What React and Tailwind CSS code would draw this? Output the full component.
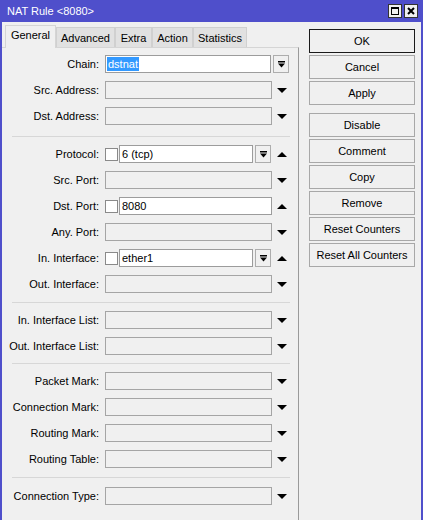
const Down = () => (
  <svg width="10" height="5" viewBox="0 0 10 5" className="block">
    <polygon points="0,0 10,0 5,5" fill="#000" />
  </svg>
)

const Up = () => (
  <svg width="10" height="5" viewBox="0 0 10 5" className="block">
    <polygon points="0,5 10,5 5,0" fill="#000" />
  </svg>
)

const DropBtn = () => (
  <div className="w-[16px] h-[18px] border border-[#adadad] bg-[#f0f0f0] flex items-center justify-center shrink-0">
    <svg width="7" height="7" viewBox="0 0 7 7" className="block">
      <rect x="0" y="0" width="7" height="1.5" fill="#000" />
      <polygon points="0,2.5 7,2.5 3.5,6.5" fill="#000" />
    </svg>
  </div>
)

const Check = () => <div className="w-[13px] h-[13px] border border-[#8a8a8a] bg-white shrink-0" />

const Label = ({ children }) => <div className="w-[97px] text-right shrink-0 whitespace-nowrap">{children}</div>

const EmptyRow = ({ label }) => (
  <div className="h-[26px] flex items-center">
    <Label>{label}</Label>
    <div className="ml-[6px] w-[167px] h-[18px] border border-[#a5a5a5] bg-[#f0f0f0]" />
    <div className="ml-[5px]"><Down /></div>
  </div>
)

const Sep = ({ h, pt }) => (
  <div className={`${h} ${pt}`}>
    <div className="ml-[10px] mr-[8px] border-t border-[#d7d7d7]" />
  </div>
)

const Tab = ({ label, w, active }) =>
  active ? (
    <div className={`${w} h-[23px] bg-[#f0f0f0] border border-b-0 border-[#d5d5d5] relative z-10 flex items-start justify-center pt-[4px]`}>
      {label}
    </div>
  ) : (
    <div className={`${w} h-[21px] bg-[#e1e1e1] border border-b-0 border-[#d0d0d0] flex items-center justify-center`}>
      {label}
    </div>
  )

const Btn = ({ label, ok, className = '' }) => (
  <div className={`h-[24px] w-[106px] flex items-center justify-center bg-[#f0f0f0] border ${ok ? 'border-[#1a1a1a]' : 'border-[#a8a8a8]'} ${className}`}>
    {label}
  </div>
)

export default function App() {
  return (
    <div
      className="w-[423px] h-[520px] bg-[#f0f0f0] flex flex-col overflow-hidden border-x-2 border-[#4f4fcb] text-[11px] text-black leading-none"
      style={{ fontFamily: '"Liberation Sans", Arial, sans-serif' }}
    >
      <div className="h-[22px] bg-[#4f4fcb] flex items-center pl-[5px] pr-[3px] shrink-0">
        <span className="text-white">NAT Rule &lt;8080&gt;</span>
        <div className="ml-auto flex gap-[2px]">
          <div className="w-[14px] h-[14px] bg-[#f0f0f0] border border-[#333] flex items-center justify-center">
            <div className="w-[8px] h-[8px] border border-t-2 border-black" />
          </div>
          <div className="w-[14px] h-[14px] bg-[#f0f0f0] border border-[#333] flex items-center justify-center">
            <svg width="8" height="8" viewBox="0 0 8 8" className="block">
              <path d="M1 1L7 7M7 1L1 7" stroke="#000" strokeWidth="2" />
            </svg>
          </div>
        </div>
      </div>

      <div className="flex flex-1">
        <div className="w-[297px] flex flex-col pt-[3px] shrink-0">
          <div className="flex items-end pl-[3px] -mb-[1px]">
            <Tab label="General" w="w-[51px]" active />
            <Tab label="Advanced" w="w-[59px]" />
            <Tab label="Extra" w="w-[37px]" />
            <Tab label="Action" w="w-[41px]" />
            <Tab label="Statistics" w="w-[54px]" />
          </div>
          <div className="flex-1 border-t border-r border-t-[#d5d5d5] border-r-[#9a9a9a] pt-[3px]">
            <div className="h-[26px] flex items-center">
              <Label>Chain:</Label>
              <div className="ml-[6px] w-[166px] h-[18px] border border-[#9c9c9c] bg-white flex items-center pl-[1px]">
                <span className="bg-[#3399ff] text-white h-[14px] flex items-center px-[1px]">dstnat</span>
              </div>
              <div className="ml-[2px]"><DropBtn /></div>
            </div>
            <EmptyRow label="Src. Address:" />
            <EmptyRow label="Dst. Address:" />

            <Sep h="h-[12px]" pt="pt-[7px]" />

            <div className="h-[26px] flex items-center">
              <Label>Protocol:</Label>
              <div className="ml-[6px] flex items-center">
                <Check />
                <div className="ml-[1px] w-[134px] h-[18px] border border-[#9c9c9c] bg-white flex items-center pl-[2px]">6 (tcp)</div>
                <div className="ml-[2px]"><DropBtn /></div>
              </div>
              <div className="ml-[6px]"><Up /></div>
            </div>
            <EmptyRow label="Src. Port:" />
            <div className="h-[26px] flex items-center">
              <Label>Dst. Port:</Label>
              <div className="ml-[6px] flex items-center">
                <Check />
                <div className="ml-[1px] w-[153px] h-[18px] border border-[#9c9c9c] bg-white flex items-center pl-[2px]">8080</div>
              </div>
              <div className="ml-[5px]"><Up /></div>
            </div>
            <EmptyRow label="Any. Port:" />
            <div className="h-[26px] flex items-center">
              <Label>In. Interface:</Label>
              <div className="ml-[6px] flex items-center">
                <Check />
                <div className="ml-[1px] w-[134px] h-[18px] border border-[#9c9c9c] bg-white flex items-center pl-[2px]">ether1</div>
                <div className="ml-[2px]"><DropBtn /></div>
              </div>
              <div className="ml-[6px]"><Up /></div>
            </div>
            <EmptyRow label="Out. Interface:" />

            <Sep h="h-[10px]" pt="pt-[5px]" />

            <EmptyRow label="In. Interface List:" />
            <EmptyRow label="Out. Interface List:" />

            <Sep h="h-[9px]" pt="pt-[4px]" />

            <EmptyRow label="Packet Mark:" />
            <EmptyRow label="Connection Mark:" />
            <EmptyRow label="Routing Mark:" />
            <EmptyRow label="Routing Table:" />

            <Sep h="h-[11px]" pt="pt-[5px]" />

            <EmptyRow label="Connection Type:" />
          </div>
        </div>

        <div className="pl-[10px] pt-[7px] flex flex-col gap-[2px]">
          <Btn label="OK" ok />
          <Btn label="Cancel" />
          <Btn label="Apply" />
          <Btn label="Disable" className="mt-[6px]" />
          <Btn label="Comment" />
          <Btn label="Copy" />
          <Btn label="Remove" />
          <Btn label="Reset Counters" />
          <Btn label="Reset All Counters" />
        </div>
      </div>
    </div>
  )
}
